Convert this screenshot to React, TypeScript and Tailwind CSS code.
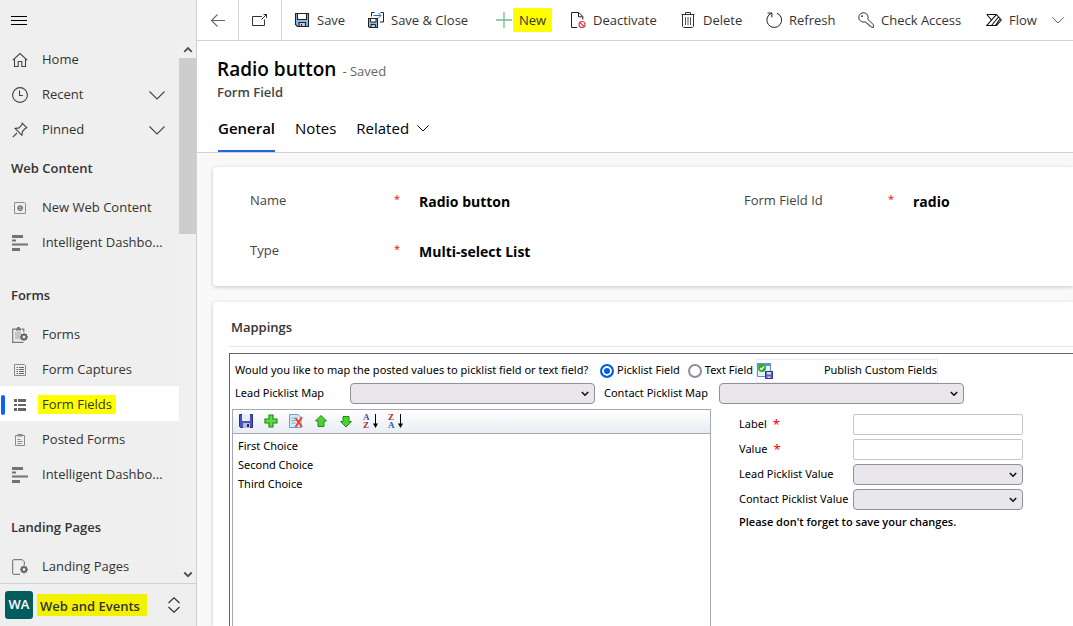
import { useState, type ReactNode } from 'react';

interface IconProps {
  children: ReactNode;
  size?: number;
  className?: string;
}

const Icon = ({ children, size = 16, className = '' }: IconProps) => (
  <svg
    width={size}
    height={size}
    viewBox="0 0 16 16"
    fill="none"
    stroke="currentColor"
    strokeWidth="1"
    className={`shrink-0 ${className}`}
    aria-hidden="true"
  >
    {children}
  </svg>
);

const ChevronDown = ({ className = '' }: { className?: string }) => (
  <Icon className={className}>
    <path d="M0.5 4.5 8 12l7.5-7.5" stroke="#444" strokeWidth="1.1" />
  </Icon>
);

const SmallChevron = () => (
  <Icon size={12}>
    <path d="M.5 4.5 8 12l7.5-7.5" strokeWidth="1.3" />
  </Icon>
);

/* sidebar icons */

const HomeIcon = () => (
  <Icon>
    <path d="M.8 8.2 8 1.5l7.2 6.7M2.5 7v7.5h3.7V9.5h3.6v5h3.7V7" stroke="#444" strokeWidth="1.1" />
  </Icon>
);

const ClockIcon = () => (
  <Icon>
    <circle cx="8" cy="8" r="7.4" stroke="#444" strokeWidth="1.1" />
    <path d="M7.5 3.5v5H11" stroke="#444" strokeWidth="1.1" />
  </Icon>
);

const PinIcon = () => (
  <Icon>
    <path
      d="M.8 15.2 5 11M10.2 1.2l4.6 4.6-1.4.5-3 3.2-.5 3.8-6.8-6.8 3.9-.6 2.9-3.1z"
      stroke="#444"
      strokeWidth="1.1"
    />
  </Icon>
);

const WebContentIcon = () => (
  <Icon>
    <path d="M2.5 2.5h10l1 1v10h-11z" stroke="#8a8a8a" />
    <path d="M6 8.2h4.4c0-3.2-4.4-3.2-4.4 0 0 2.6 3 2.7 4.2 1.2" stroke="#666" strokeWidth="1.2" />
  </Icon>
);

const DashboardIcon = () => (
  <Icon>
    <path d="M0 0h11v3H0zM0 4.5h4v2H0zM0 8.5h16v2H0zM0 13h8v3H0z" fill="#737373" stroke="none" />
  </Icon>
);

const Gear = ({ x, y }: { x: number; y: number }) => (
  <g transform={`translate(${x} ${y})`}>
    <circle r="2.3" stroke="#666" strokeWidth="1.8" />
    <path
      d="M0-4v1.5M0 2.5V4M-4 0h1.5M2.5 0H4M-2.8-2.8l1 1M1.8 1.8l1 1M-2.8 2.8l1-1M1.8-1.8l1-1"
      stroke="#666"
      strokeWidth="1.4"
    />
  </g>
);

const FormsIcon = () => (
  <Icon>
    <path d="M4 2.2H.7v13.1H11.5M9.5 2.2h2.3V5" stroke="#777" strokeWidth="1.2" />
    <path d="M4 1.2h1.2V0h2.6v1.2H9v2.3H4z" fill="#777" stroke="none" />
    <path d="M3 4.5h6v8H3z" fill="#c4c4c4" stroke="none" />
    <Gear x={12} y={10} />
  </Icon>
);

const CaptureIcon = () => (
  <Icon>
    <path d="M2.5 2.5h10l1 1v10h-11z" stroke="#8a8a8a" />
    <path d="M4.5 5.5H6m1 0h5M4.5 7.5H6m1 0h5M4.5 9.5H6m1 0h5M4.5 11.5H6m1 0h5" stroke="#666" />
  </Icon>
);

const FieldsIcon = () => (
  <Icon>
    <path d="M2 2h3v3H2zM6 2h8v3H6zM2 7h3v2H2zM6 7h8v2H6zM2 11h3v3H2zM6 11h8v3H6z" fill="#666" stroke="none" />
  </Icon>
);

const ClipboardIcon = () => (
  <Icon>
    <path d="M3.5 3.5h9v10h-9z" stroke="#8a8a8a" />
    <path d="M5.5 2h5v2.5h-5z" fill="#8a8a8a" stroke="none" />
    <path d="M5.5 7.5h3M5.5 9.5h5M5.5 11.5h4" stroke="#8a8a8a" />
  </Icon>
);

const PageIcon = () => (
  <Icon>
    <path d="M8 15.3H1.7a1 1 0 0 1-1-1V1.7a1 1 0 0 1 1-1h8.6l2 2V6" stroke="#666" />
    <Gear x={12} y={10.5} />
  </Icon>
);

/* command bar icons */

const BackIcon = () => (
  <Icon>
    <path d="M15 8.5H1.5M7.5 2.5l-6 6 6 6" stroke="#666" strokeWidth="1.1" />
  </Icon>
);

const PopOutIcon = () => (
  <Icon>
    <path d="M10 4.5H.5v9h12V7.5M9.5 7.5l5.5-5.5M11.5 2.5h3V6" stroke="#333" />
  </Icon>
);

const SaveIcon = () => (
  <Icon>
    <path d="M1.5 1.5h13v13h-11l-2-2z" fill="#86bdea" stroke="#222" strokeWidth="1.1" />
    <path d="M3.5 1.5h9v6h-9z" fill="#fff" stroke="#222" strokeWidth="1.1" />
    <path d="M5 10.5h6.5v4H5z" fill="#ccc" stroke="#222" strokeWidth="1.1" />
    <path d="M7.5 12v2.5" stroke="#222" />
  </Icon>
);

const SaveCloseIcon = () => (
  <Icon>
    <path d="M.5 6.5h9v9h-8l-1-1z" fill="#86bdea" stroke="#222" strokeWidth="1.1" />
    <path d="M2.5 6.5H8V10H2.5z" fill="#fff" stroke="#222" />
    <path d="M3 12.5h4.5v3H3z" fill="#ccc" stroke="#222" />
    <path d="M3.5 4.5v-4h3M12.5.5h3V10H12" stroke="#222" />
    <path d="M5.5 3.5h7M10.5 1 13 3.5 10.5 6" stroke="#1a6fc4" />
  </Icon>
);

const PlusIcon = () => (
  <Icon>
    <path d="M8 0v16M0 8h16" stroke="#6bbd92" strokeWidth="1.3" />
  </Icon>
);

const DeactivateIcon = () => (
  <Icon>
    <path d="M7 15.5H1.5V.5h7.3l4 4v3M8.5.8v4h4" stroke="#222" />
    <circle cx="12" cy="12.5" r="3" stroke="#e0393e" strokeWidth="1.1" />
    <path d="m10 10.5 4 4" stroke="#e0393e" strokeWidth="1.1" />
  </Icon>
);

const DeleteIcon = () => (
  <Icon>
    <path d="M1.5 2.5h13M5.5 2.5v-2h5v2M2.5 2.5v12l1 1h9l1-1v-12" stroke="#333" />
    <path d="M5.5 5v8M8 5v8M10.5 5v8" stroke="#555" />
  </Icon>
);

const RefreshIcon = () => (
  <Icon>
    <path d="M5.5 1.2A7.4 7.4 0 1 0 11 1.2M1.5 1h4.4v4.4" stroke="#222" />
  </Icon>
);

const KeyIcon = () => (
  <Icon>
    <path
      d="M9.8 7.3a4.7 4.7 0 1 0-2.9 2.6l1.5.5.6 1.5 1.7.2.4 1.7 1.6.2 1 1.4h1.7v-2.7z"
      stroke="#333"
    />
    <circle cx="4" cy="4.2" r=".9" fill="#333" stroke="none" />
  </Icon>
);

const FlowIcon = () => (
  <Icon>
    <path
      d="M.8 2.5h9.7L15.3 8l-4.8 5.5H.8L10.3 2.7M.8 2.5 5.5 8M5.5 13.5l7-8.5M9.5 13.5l4.300-6.500"
      stroke="#111"
      strokeWidth="1.1"
    />
  </Icon>
);

/* list toolbar icons */

const DiskIcon = () => (
  <Icon>
    <path d="M1.5 1.5h13v13h-12l-1-1z" fill="#4a50c0" stroke="#2c2f86" />
    <path d="M4 1h8v7H4z" fill="#e9eefb" stroke="none" />
    <path d="M5 10h7v5H5z" fill="#b9bdd0" stroke="none" />
    <path d="M9 11h2v3H9z" fill="#26285f" stroke="none" />
  </Icon>
);

const AddIcon = () => (
  <Icon>
    <path d="M6 2h4v4h4v4h-4v4H6v-4H2V6h4z" fill="#5fdc3d" stroke="#1f8a1a" strokeWidth="1.2" />
  </Icon>
);

const RemoveIcon = () => (
  <Icon>
    <path d="M1.5 1.5H10l3 3v10H1.5z" fill="#d5e8fb" stroke="#6a9bd8" />
    <path d="M3.5 5h5M3.5 7.5h4M3.5 10h4" stroke="#7fa9d8" />
    <path d="m7.5 5 6.5 9M14 4 7.5 14" stroke="#f0431c" strokeWidth="2" />
  </Icon>
);

const UpIcon = () => (
  <Icon>
    <path d="M8 2.5 13.5 8H11v5.5H5V8H2.5z" fill="#4fd12f" stroke="#1f8a1a" />
  </Icon>
);

const DownIcon = () => (
  <Icon>
    <path d="M8 14 2.5 8.5H5v-5h6v5h2.5z" fill="#4fd12f" stroke="#1f8a1a" />
  </Icon>
);

const SortIcon = ({ letters }: { letters: string }) => {
  const colors: Record<string, string> = { A: '#2f55a4', Z: '#9c2f35' };
  return (
    <Icon className="overflow-visible">
      {letters.split('').map((letter, i) => (
        <text
          key={letter}
          x="0"
          y={i === 0 ? 7 : 15}
          fontSize="9"
          fontWeight="700"
          fontFamily="Liberation Serif, serif"
          fill={colors[letter]}
          stroke="none"
        >
          {letter}
        </text>
      ))}
      <path d="M12.5 1v13" stroke="#000" />
      <path d="M10 10.5h5L12.5 15z" fill="#000" stroke="none" />
    </Icon>
  );
};

const PublishIcon = () => (
  <Icon>
    <path d="M.5 1.5h13v12H.5z" fill="#eaf3fe" stroke="#5b93d8" />
    <path d="M0 0h14v3H0z" fill="#5b93d8" stroke="none" />
    <circle cx="5" cy="5" r="4" fill="#2fae2b" stroke="none" />
    <path d="m3 5 1.5 1.5L7 3.5" stroke="#fff" strokeWidth="1.3" />
    <path d="M8.5 8.5h7v7h-7z" fill="#5a60c4" stroke="#31347f" />
    <path d="M10 9h4v2.5h-4zM10.5 13.5h3V15h-3z" fill="#d4d8f0" stroke="none" />
  </Icon>
);

interface NavItem {
  label: string;
  icon: ReactNode;
  expandable?: boolean;
  active?: boolean;
}

const topItems: NavItem[] = [
  { label: 'Home', icon: <HomeIcon /> },
  { label: 'Recent', icon: <ClockIcon />, expandable: true },
  { label: 'Pinned', icon: <PinIcon />, expandable: true },
];

const navGroups: { title: string; items: NavItem[] }[] = [
  {
    title: 'Web Content',
    items: [
      { label: 'New Web Content', icon: <WebContentIcon /> },
      { label: 'Intelligent Dashbo...', icon: <DashboardIcon /> },
    ],
  },
  {
    title: 'Forms',
    items: [
      { label: 'Forms', icon: <FormsIcon /> },
      { label: 'Form Captures', icon: <CaptureIcon /> },
      { label: 'Form Fields', icon: <FieldsIcon />, active: true },
      { label: 'Posted Forms', icon: <ClipboardIcon /> },
      { label: 'Intelligent Dashbo...', icon: <DashboardIcon /> },
    ],
  },
  {
    title: 'Landing Pages',
    items: [{ label: 'Landing Pages', icon: <PageIcon /> }],
  },
];

const commands = [
  { label: 'Save', icon: <SaveIcon />, width: 'w-[74px]' },
  { label: 'Save & Close', icon: <SaveCloseIcon />, width: 'w-[128px]' },
  { label: 'New', icon: <PlusIcon />, width: 'w-[74px]', marked: true },
  { label: 'Deactivate', icon: <DeactivateIcon />, width: 'w-[110px]' },
  { label: 'Delete', icon: <DeleteIcon />, width: 'w-[86px]' },
  { label: 'Refresh', icon: <RefreshIcon />, width: 'w-[92px]' },
  { label: 'Check Access', icon: <KeyIcon />, width: 'w-[128px]' },
  { label: 'Flow', icon: <FlowIcon />, width: 'w-[58px]' },
];

const NavList = ({ items }: { items: NavItem[] }) => (
  <ul>
    {items.map((item) => (
      <li key={item.label}>
        <a
          href="#"
          className={`relative flex h-[35px] items-center pt-[2px] pr-[14px] pl-3 whitespace-nowrap ${item.active ? 'bg-white' : ''}`}
        >
          {item.active && <span className="absolute left-px h-5 w-1 rounded-sm bg-[#0b62f5]" />}
          {item.icon}
          <span className={item.active ? 'ml-[10px] bg-[#ffff00] px-1' : 'ml-[14px]'}>{item.label}</span>
          {item.expandable && <ChevronDown className="ml-auto" />}
        </a>
      </li>
    ))}
  </ul>
);

const Sidebar = () => (
  <aside className="flex w-[197px] shrink-0 flex-col border-r border-[#d0d0d0] bg-[#efefef] text-[13px] text-[#333]">
    <div className="flex h-[41px] shrink-0 items-center pl-[11px]">
      <button aria-label="Menu" className="text-black">
        <Icon>
          <path d="M0 3.5h16M0 7.5h16M0 11.5h16" />
        </Icon>
      </button>
    </div>

    <div className="flex min-h-0 flex-1">
      <nav className="flex-1 overflow-hidden">
        <NavList items={topItems} />
        <div className="flex flex-col gap-[14px]">
          {navGroups.map((group) => (
            <div key={group.title}>
              <h2 className="flex h-[43px] items-center pt-[2px] pl-[11px] font-semibold">{group.title}</h2>
              <NavList items={group.items} />
            </div>
          ))}
        </div>
      </nav>
      <div className="flex w-[17px] flex-col items-center justify-between bg-[#f0f0f0] pb-[3px]">
        <div className="flex w-full flex-col items-center">
          <span className="flex h-[17px] items-center">
            <Icon size={10}>
              <path d="m2 11 6-6 6 6" stroke="#505050" strokeWidth="3" />
            </Icon>
          </span>
          <span className="h-[176px] w-full bg-[#cdcdcd]" />
        </div>
        <Icon size={10}>
          <path d="m2 4 6 6 6-6" stroke="#505050" strokeWidth="3" />
        </Icon>
      </div>
    </div>

    <button className="flex h-[43px] shrink-0 items-center border-t border-[#d0d0d0] pl-[5px]">
      <span className="flex h-7 w-7 items-center justify-center rounded-[3px] bg-[#045d5d] font-semibold text-white">WA</span>
      <span className="ml-1 bg-[#f2f200] pt-[3px] pr-[7px] pl-[3px] font-semibold whitespace-nowrap">Web and Events</span>
      <Icon className="mr-[14px] ml-auto">
        <path d="M2.5 6 8 .8 13.5 6M2.5 10 8 15.2 13.5 10" strokeWidth="1.2" />
      </Icon>
    </button>
  </aside>
);

const CommandBar = () => (
  <div className="flex h-[41px] shrink-0 items-stretch border-b border-[#d2d2d2] text-[13px] text-[#333]">
    <button aria-label="Back" className="flex w-[42px] shrink-0 items-center justify-center border-r border-[#d2d2d2]">
      <BackIcon />
    </button>
    <button
      aria-label="Open in new window"
      className="flex w-[43px] shrink-0 items-center justify-center border-r border-[#d2d2d2]"
    >
      <PopOutIcon />
    </button>
    <div className="flex pl-3">
      {commands.map((command) => (
        <button key={command.label} className={`flex shrink-0 items-center whitespace-nowrap ${command.width}`}>
          {command.icon}
          <span className={command.marked ? 'ml-px bg-[#ffff00] px-[6px] pt-[3px] pb-px' : 'ml-[7px] pt-[2px]'}>
            {command.label}
          </span>
        </button>
      ))}
      <button aria-label="More flows" className="pl-2 text-[#a0522d]">
        <SmallChevron />
      </button>
    </div>
  </div>
);

const RecordHeader = () => (
  <header className="shrink-0 border-b border-[#d2d2d2] px-5 pt-4">
    <div className="flex items-baseline gap-[6px]">
      <h1 className="text-[19px] leading-6 font-semibold text-black">Radio button</h1>
      <span className="text-[13px] text-[#666]">- Saved</span>
    </div>
    <p className="text-[13px] leading-5 font-semibold text-[#444]">Form Field</p>
    <div className="mt-[9px] flex gap-5 pl-px text-[15px] text-black">
      <button className="h-[41px] border-b-2 border-[#2266e3] pb-1 font-semibold">General</button>
      <button className="h-[41px] pb-[6px]">Notes</button>
      <button className="flex h-[41px] items-center gap-2 pb-[6px]">
        Related
        <SmallChevron />
      </button>
    </div>
  </header>
);

const Field = ({ label, value }: { label: string; value: string }) => (
  <dl className="flex h-[22px] w-[494px] shrink-0">
    <dt className="flex w-[169px] text-[13px] leading-5 text-[#444]">
      <span className="w-36">{label}</span>
      <span className="text-[11px] leading-[18px] text-[#e00]">*</span>
    </dt>
    <dd className="pt-[2px] text-[14px] leading-5 font-bold text-black">{value}</dd>
  </dl>
);

interface SelectBoxProps {
  id: string;
  width: string;
}

const SelectBox = ({ id, width }: SelectBoxProps) => (
  <div className={`relative shrink-0 ${width}`}>
    <select id={id} className="block h-[21px] w-full appearance-none rounded-[4px] border border-[#8f8f9d] bg-[#e9e7ec] px-1">
      <option></option>
    </select>
    <svg width="8" height="6" viewBox="0 0 8 6" className="pointer-events-none absolute top-2 right-[6px]" aria-hidden="true">
      <path d="m.8 1 3.2 3.2L7.2 1" fill="none" stroke="#111" strokeWidth="1.6" />
    </svg>
  </div>
);

interface RadioOptionProps {
  label: string;
  checked: boolean;
  onChange: () => void;
}

const RadioOption = ({ label, checked, onChange }: RadioOptionProps) => (
  <label className="flex items-center gap-[3px]">
    <input
      type="radio"
      name="mapTarget"
      checked={checked}
      onChange={onChange}
      className="h-[14px] w-[14px] appearance-none rounded-full border-2 border-[#8f8f9d] bg-white checked:border-[#0060df] checked:bg-[#0060df] checked:shadow-[inset_0_0_0_2px_white]"
    />
    {label}
  </label>
);

const listTools = [
  { label: 'Save', icon: <DiskIcon /> },
  { label: 'Add', icon: <AddIcon /> },
  { label: 'Remove', icon: <RemoveIcon /> },
  { label: 'Move up', icon: <UpIcon /> },
  { label: 'Move down', icon: <DownIcon /> },
  { label: 'Sort ascending', icon: <SortIcon letters="AZ" /> },
  { label: 'Sort descending', icon: <SortIcon letters="ZA" /> },
];

const choices = ['First Choice', 'Second Choice', 'Third Choice'];

const detailFields = [
  { id: 'label', label: 'Label', type: 'text' },
  { id: 'value', label: 'Value', type: 'text' },
  { id: 'leadValue', label: 'Lead Picklist Value', type: 'select' },
  { id: 'contactValue', label: 'Contact Picklist Value', type: 'select' },
];

const Mappings = () => {
  const [target, setTarget] = useState('picklist');

  return (
    <section className="flex min-h-0 flex-1 flex-col rounded-tl-[4px] bg-white pl-4 shadow-[0_1px_4px_rgba(0,0,0,0.2)]">
      <h2 className="h-[45px] shrink-0 border-b border-[#e8e8e8] pt-[15px] pl-[2px] text-[13px] leading-5 font-semibold text-[#333]">
        Mappings
      </h2>
      <div className="mt-[6px] flex min-h-0 flex-1 flex-col border-t border-l border-[#666] pt-[5px] pl-[2px] font-['Noto_Sans',sans-serif] text-[11px] whitespace-nowrap text-black">
        <div className="flex h-6 shrink-0 items-center pl-[3px]">
          <span className="w-[365px]">Would you like to map the posted values to picklist field or text field?</span>
          <div className="flex gap-2">
            <RadioOption label="Picklist Field" checked={target === 'picklist'} onChange={() => setTarget('picklist')} />
            <RadioOption label="Text Field" checked={target === 'text'} onChange={() => setTarget('text')} />
          </div>
          <button className="ml-[3px] flex h-6 w-[182px] items-center justify-between border border-[#ececf0]">
            <PublishIcon />
            Publish Custom Fields
          </button>
        </div>
        <div className="flex shrink-0 items-center pl-[3px]">
          <label htmlFor="leadMap" className="w-[115px]">Lead Picklist Map</label>
          <SelectBox id="leadMap" width="w-[245px]" />
          <label htmlFor="contactMap" className="w-[124px] pl-[9px]">Contact Picklist Map</label>
          <SelectBox id="contactMap" width="w-[245px]" />
        </div>

        <div className="mt-[5px] flex min-h-0 flex-1">
          <div className="w-[479px] shrink-0 border-x border-t border-[#a3a9b5]">
            <div className="flex h-6 items-center gap-[9px] border-b border-[#a3a9b5] bg-linear-to-b from-white to-[#e8edf3] pl-[5px]">
              {listTools.map((tool) => (
                <button key={tool.label} aria-label={tool.label}>
                  {tool.icon}
                </button>
              ))}
            </div>
            <ul className="pt-[2px] pl-[5px]">
              {choices.map((choice) => (
                <li key={choice} className="h-[19px] leading-[19px]">{choice}</li>
              ))}
            </ul>
          </div>

          <div className="flex flex-col gap-1 pt-[5px] pl-7">
            {detailFields.map((field) => (
              <div key={field.id} className="flex h-[21px] items-center">
                <label htmlFor={field.id} className="flex w-[114px] items-center gap-[6px]">
                  {field.label}
                  {field.type === 'text' && <span className="text-[13px] leading-4 text-[#e00]">*</span>}
                </label>
                {field.type === 'text' ? (
                  <input id={field.id} type="text" className="h-[21px] w-[170px] rounded-[2px] border border-[#c5c5cf] px-1" />
                ) : (
                  <SelectBox id={field.id} width="w-[170px]" />
                )}
              </div>
            ))}
            <p className="font-['Open_Sans',sans-serif] font-semibold">Please don't forget to save your changes.</p>
          </div>
        </div>
      </div>
    </section>
  );
};

const App = () => {
  return (
    <div className="flex h-screen overflow-hidden bg-white font-['Open_Sans',sans-serif]">
      <Sidebar />
      <main className="flex min-w-0 flex-1 flex-col overflow-hidden">
        <CommandBar />
        <RecordHeader />
        <div className="flex min-h-0 flex-1 flex-col gap-4 bg-[#faf9f8] pt-[14px] pl-4">
          <section className="flex shrink-0 flex-col gap-7 rounded-l-[4px] bg-white pt-[23px] pb-6 pl-[37px] shadow-[0_1px_4px_rgba(0,0,0,0.2)]">
            <div className="flex">
              <Field label="Name" value="Radio button" />
              <Field label="Form Field Id" value="radio" />
            </div>
            <Field label="Type" value="Multi-select List" />
          </section>
          <Mappings />
        </div>
      </main>
    </div>
  );
};

export default App;
